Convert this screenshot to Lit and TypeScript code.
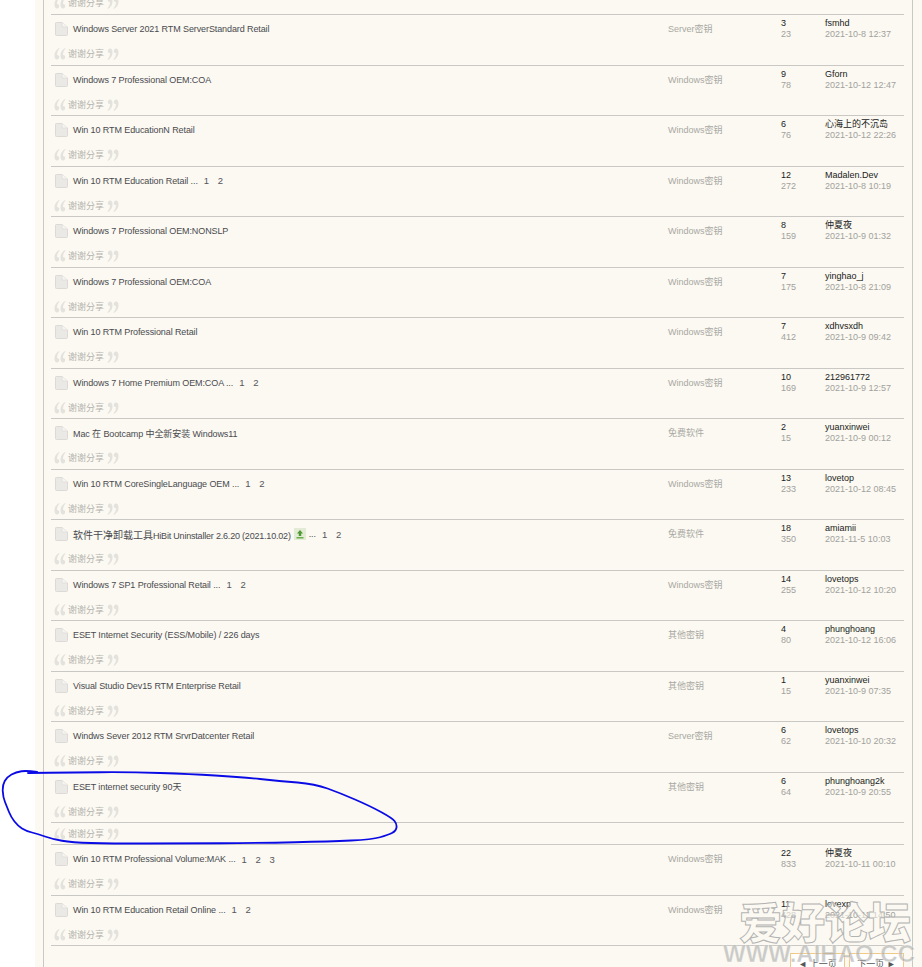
import { LitElement, html, css, svg } from "lit";
import { customElement } from "lit/decorators.js";

interface Row { t: string; c?: string; p?: number[]; f: string; r: number; v: number; u: string; d: string; badge?: boolean; }

const rows: Row[] = [
  { t: "Windows Server 2021 RTM ServerStandard Retail", f: "Server密钥", r: 3, v: 23, u: "fsmhd", d: "2021-10-8 12:37" },
  { t: "Windows 7 Professional OEM:COA", f: "Windows密钥", r: 9, v: 78, u: "Gforn", d: "2021-10-12 12:47" },
  { t: "Win 10 RTM EducationN Retail", f: "Windows密钥", r: 6, v: 76, u: "心海上的不沉岛", d: "2021-10-12 22:26" },
  { t: "Win 10 RTM Education Retail ...", p: [1, 2], f: "Windows密钥", r: 12, v: 272, u: "Madalen.Dev", d: "2021-10-8 10:19" },
  { t: "Windows 7 Professional OEM:NONSLP", f: "Windows密钥", r: 8, v: 159, u: "仲夏夜", d: "2021-10-9 01:32" },
  { t: "Windows 7 Professional OEM:COA", f: "Windows密钥", r: 7, v: 175, u: "yinghao_j", d: "2021-10-8 21:09" },
  { t: "Win 10 RTM Professional Retail", f: "Windows密钥", r: 7, v: 412, u: "xdhvsxdh", d: "2021-10-9 09:42" },
  { t: "Windows 7 Home Premium OEM:COA ...", p: [1, 2], f: "Windows密钥", r: 10, v: 169, u: "212961772", d: "2021-10-9 12:57" },
  { t: "Mac 在 Bootcamp 中全新安装 Windows11", f: "免费软件", r: 2, v: 15, u: "yuanxinwei", d: "2021-10-9 00:12" },
  { t: "Win 10 RTM CoreSingleLanguage OEM ...", p: [1, 2], f: "Windows密钥", r: 13, v: 233, u: "lovetop", d: "2021-10-12 08:45" },
  { c: "软件干净卸载工具", t: "HiBit Uninstaller 2.6.20 (2021.10.02)", badge: true, p: [1, 2], f: "免费软件", r: 18, v: 350, u: "amiamii", d: "2021-11-5 10:03" },
  { t: "Windows 7 SP1 Professional Retail ...", p: [1, 2], f: "Windows密钥", r: 14, v: 255, u: "lovetops", d: "2021-10-12 10:20" },
  { t: "ESET Internet Security (ESS/Mobile) / 226 days", f: "其他密钥", r: 4, v: 80, u: "phunghoang", d: "2021-10-12 16:06" },
  { t: "Visual Studio Dev15 RTM Enterprise Retail", f: "其他密钥", r: 1, v: 15, u: "yuanxinwei", d: "2021-10-9 07:35" },
  { t: "Windws Sever 2012 RTM SrvrDatcenter Retail", f: "Server密钥", r: 6, v: 62, u: "lovetops", d: "2021-10-10 20:32" },
  { t: "ESET internet security 90天", f: "其他密钥", r: 6, v: 64, u: "phunghoang2k", d: "2021-10-9 20:55" },
];
const rowsAfter: Row[] = [
  { t: "Win 10 RTM Professional Volume:MAK ...", p: [1, 2, 3], f: "Windows密钥", r: 22, v: 833, u: "仲夏夜", d: "2021-10-11 00:10" },
  { t: "Win 10 RTM Education Retail Online ...", p: [1, 2], f: "Windows密钥", r: 11, v: 428, u: "lovexp", d: "2021-10-11 14:50" },
];

const inkPts: [number, number][] = [
  [37, 772], [27, 770.5], [16, 772], [7, 777], [2.5, 785], [3, 797], [7, 807], [11, 817], [18, 826], [26, 831], [38, 834], [52, 839], [72, 842.5],
  [110, 843.5], [180, 843.5], [260, 843], [330, 841.5], [372, 839.5], [388, 835], [396, 831], [397, 824], [392, 818], [370, 806], [340, 793], [315, 784],
  [280, 781], [240, 777], [190, 774], [130, 772], [70, 772.5], [28, 773],
];
const inkPath = () => {
  let d = `M${inkPts[0][0]} ${inkPts[0][1]}`;
  for (let i = 1; i < inkPts.length - 1; i++) {
    const [x, y] = inkPts[i];
    const [nx, ny] = inkPts[i + 1];
    d += ` Q${x} ${y} ${(x + nx) / 2} ${(y + ny) / 2}`;
  }
  const l = inkPts[inkPts.length - 1];
  return d + ` L${l[0]} ${l[1]}`;
};

const pageIcon = html`<svg class="ic" width="13" height="14" viewBox="0 0 13 14"><path d="M.5 1.2Q.5.5 1.2.5H7L12.5 5V12.6Q12.5 13.5 11.6 13.5H1.4Q.5 13.5.5 12.6Z" fill="#ebe9e5" stroke="#dcdad6"/><path d="M7 .5V5H12.5" fill="#f6f5f1" stroke="#e2e0dc"/></svg>`;
const q = svg`<path d="M5 0C2 2 .5 4 .5 7.5 .5 10 1.5 11.5 3 11.5 4.5 11.5 5.2 10 5.2 9 5.2 7.5 4 6.8 3 7 3 4.5 3.8 2.5 5.5 .8Z"/><path d="M11 0C8 2 6.5 4 6.5 7.5 6.5 10 7.5 11.5 9 11.5 10.5 11.5 11.2 10 11.2 9 11.2 7.5 10 6.8 9 7 9 4.5 9.8 2.5 11.5 .8Z"/>`;
const quoteL = html`<svg class="q" width="12" height="12" viewBox="0 0 12 12">${q}</svg>`;
const quoteR = html`<svg class="q" width="12" height="12" viewBox="0 0 12 12"><g transform="rotate(180 6 6)">${q}</g></svg>`;
const thanks = html`<div class="thanks">${quoteL}<span>谢谢分享</span>${quoteR}</div>`;

@customElement("app-root")
export class AppRoot extends LitElement {
  static styles = css`
    :host { display: block; position: relative; height: 967px; overflow: hidden; background: #fff;
      font-family: "Liberation Sans", "Noto Sans CJK SC", sans-serif; font-size: 9px; color: #444; }
    .page { margin-left: 35px; height: 967px; background: #fbf9f1; padding-left: 8px; box-sizing: border-box; }
    .frame { width: 870px; height: 967px; box-sizing: border-box; border-left: 1px solid #c9c8c4; border-right: 1px solid #c9c8c4; padding: 0 8px 0 7px; overflow: hidden; }
    .stub { box-sizing: border-box; border-bottom: 1px solid #c9c8c4; display: flex; align-items: flex-end; }
    .stub.top { height: 15px; padding-bottom: 5px; }
    .stub.mid { height: 22px; padding-bottom: 4px; }
    .row { box-sizing: border-box; height: 50.5px; border-bottom: 1px solid #c9c8c4; display: grid;
      grid-template-columns: 617px 113px 44px 1fr; grid-template-rows: 33px 1fr; }
    .title { display: flex; align-items: center; height: 28px; white-space: nowrap; }
    .ic { margin: 0 5px 0 4px; flex: none; }
    .t { color: #4a4a50; font-size: 9px; letter-spacing: -.1px; }
    .t.wide { letter-spacing: -.2px; }
    .t .cn { font-size: 10px; letter-spacing: 0; }
    .pg { margin-left: 6px; width: 8px; color: #55555c; font-size: 9.5px; }
    .pg + .pg { margin-left: 6px; }
    .badge { margin: 0 3px; flex: none; }
    .forum { color: #a9a8a4; height: 27px; display: flex; align-items: center; }
    .num, .last { padding-top: 3px; line-height: 11px; }
    .num b, .last b { display: block; font-weight: normal; color: #222; }
    .num i, .last i { display: block; font-style: normal; color: #a2a19e; }
    .thanks { grid-column: 1 / -1; display: flex; align-items: center; height: 12px; margin-left: 3px; color: #b5b4b0; font-size: 9px; line-height: 12px; }
    .thanks span { margin: 0 2px; width: 37px; white-space: nowrap; }
    .q { fill: #e4e2dc; flex: none; }
    .pager { display: flex; justify-content: flex-end; gap: 4px; margin-top: 7px; }
    .btn { box-sizing: border-box; height: 24px; width: 55px; border: 1px solid #f0c987; background: #fff; color: #555; text-align: center; line-height: 21px; font-size: 9px; white-space: nowrap; }
    .ink { position: absolute; inset: 0; pointer-events: none; }
    .mark { position: absolute; pointer-events: none; white-space: nowrap; }
    .mark.cn { left: 739px; top: 892px; font-size: 43px; line-height: 56px; font-weight: 900; color: rgba(251,249,241,.55); -webkit-text-stroke: 1px rgba(175,175,175,.95); font-family: "Noto Sans CJK SC", sans-serif; }
    .mark.en { left: 723px; top: 940px; font-size: 24px; line-height: 28px; font-weight: 700; color: rgba(170,170,170,.6); -webkit-text-stroke: .5px rgba(255,255,255,.6); font-family: "Liberation Sans", sans-serif; }
  `;

  private renderRow(r: Row) {
    return html`<div class="row">
      <div class="title">${pageIcon}<span class="t ${r.c ? "wide" : ""}">${r.c ? html`<span class="cn">${r.c}</span>` : ""}${r.t}</span>
        ${r.badge ? html`<svg class="badge" width="12" height="12" viewBox="0 0 12 12"><rect width="12" height="12" fill="#e3ead6"/><path d="M6 2 9 5.5H7.2V8H4.8V5.5H3Z" fill="#4d9a2e"/><rect x="2.5" y="9" width="7" height="1.5" fill="#6ab04a"/></svg><span class="t">...</span>` : ""}
        ${(r.p ?? []).map((n) => html`<span class="pg">${n}</span>`)}
      </div>
      <div class="forum">${r.f}</div>
      <div class="num"><b>${r.r}</b><i>${r.v}</i></div>
      <div class="last"><b>${r.u}</b><i>${r.d}</i></div>
      ${thanks}
    </div>`;
  }

  render() {
    return html`
      <div class="page"><div class="frame">
        <div class="stub top">${thanks}</div>
        ${rows.map((r) => this.renderRow(r))}
        <div class="stub mid">${thanks}</div>
        ${rowsAfter.map((r) => this.renderRow(r))}
        <div class="pager"><div class="btn">◄ 上一页</div><div class="btn">下一页 ►</div></div>
      </div></div>
      <div class="mark cn">爱好论坛</div>
      <div class="mark en">WWW.AIHAO.CC</div>
      <svg class="ink" width="922" height="967" viewBox="0 0 922 967"><path d=${inkPath()} fill="none" stroke="#0a0ae6" stroke-width="1.8" stroke-linecap="round" stroke-linejoin="round"/></svg>
    `;
  }
}
